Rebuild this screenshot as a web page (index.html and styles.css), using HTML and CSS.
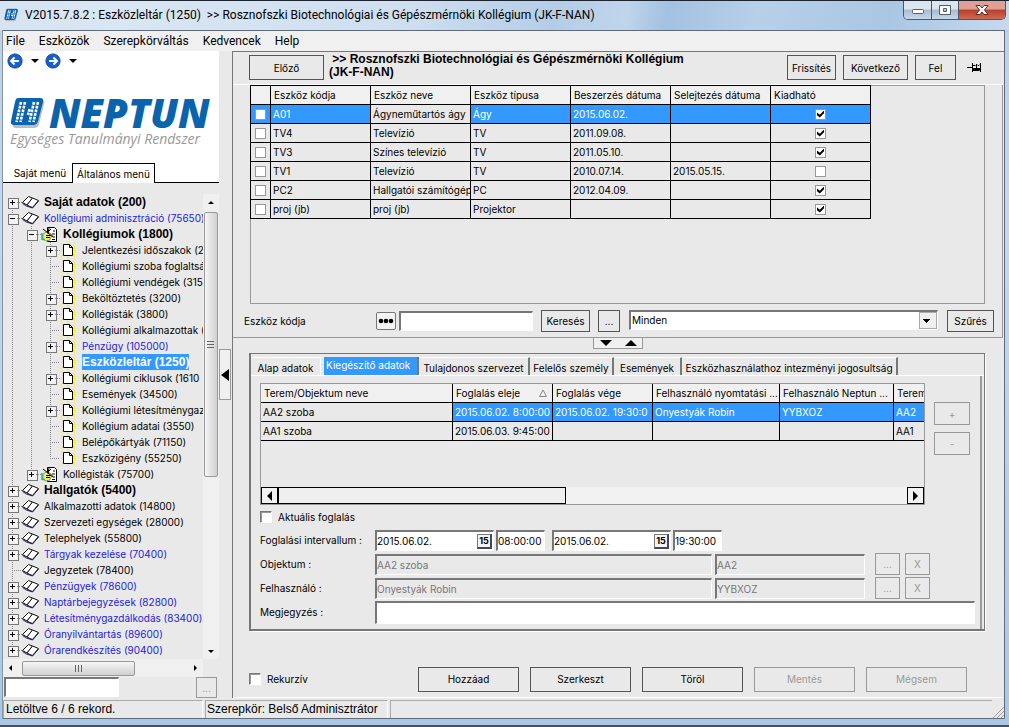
FILE: index.html
```
<!DOCTYPE html>
<html lang="hu">
<head>
<meta charset="utf-8">
<title>Eszközleltár (1250)</title>
<link rel="stylesheet" href="styles.css">
</head>
<body>
<svg class="defs" aria-hidden="true">
  <symbol id="book" viewBox="0 0 17 16">
    <path d="M.5 8.500 6.500 2.500l4 1.500-5.500 7z" fill="#fff" stroke="#111" stroke-linejoin="round"/>
    <path d="M10.500 4 16.500 6.500l-6 7-2.500-1-3-1.500z" fill="#fff" stroke="#111" stroke-linejoin="round"/>
    <path d="M.5 9.500l4 2.500 3 1 3 1 6-7" fill="none" stroke="#16166e"/>
  </symbol>
  <symbol id="page" viewBox="0 0 17 16">
    <path d="M1 1l3 3M15 1l-2 3M1 8h3M13 8h3M1 15l3-3M15 15l-3-3M8 0v2M8 16v-2M2.500 3v11M14.500 4v10" stroke="#f2ee2a" stroke-width="1.500" stroke-dasharray="1 1" fill="none"/>
    <path d="M3.500 2.500h6l3 3v8h-9z" fill="#fff" stroke="#000"/>
    <path d="M9.500 2.500v3h3" fill="none" stroke="#000"/>
  </symbol>
  <symbol id="hand" viewBox="0 0 17 16">
    <path d="M6.500 1.500h7l2 2v12h-9z" fill="#fff" stroke="#000"/>
    <path d="M12 5h2M11 8h3M12 11h2M11 13.500h3" stroke="#000"/>
    <path d="M2 8l3-2 4 1 3 3-2 1-1 3-4 1-3-2z" fill="#f5f25a" stroke="#555" stroke-width=".6"/>
    <path d="M2 3l10 8M8 2l-1 6M10 3l-4 4M5 9.500h5M5 11.500h4" stroke="#000" fill="none"/>
    <path d="M1 7v7M1 13.500h3" stroke="#18b8a8" stroke-width="1.500"/>
  </symbol>
  <symbol id="logo" viewBox="0 0 36 32">
    <path d="M7 3h25q3 0 2 4l-5 20q-1 4-5 4H6q-4 0-3-4z" fill="#b9bdc1"/>
    <path d="M8 1h22q4 0 3 4l-5 19q-1 4-5 4H4q-4 0-3-4L5 5q1-4 3-4z" fill="#0a63ad"/>
    <path d="M11 5 6.500 25M15 5l-4.500 20M24 5l-4.500 20M28 5l-4.500 20M19.500 12l-1.500 6" stroke="#fff" stroke-width="2.600" stroke-dasharray="2.800 1"/>
  </symbol>
</svg>

<div class="window">
  <header class="titlebar">
    <svg class="app-icon" viewBox="0 0 36 32"><use href="#logo"/></svg>
    <h1>V2015.7.8.2 : Eszközleltár (1250)&nbsp; &gt;&gt; Rosznofszki Biotechnológiai és Gépészmérnöki Kollégium (JK-F-NAN)</h1>
    <div class="caption">
      <button class="cap-btn cap-min" aria-label="Kis méret"><svg viewBox="0 0 14 12"><rect x="1.500" y="5.500" width="11" height="4" rx="1" fill="#fff" stroke="#555d68"/></svg></button>
      <button class="cap-btn cap-max" aria-label="Teljes méret"><svg viewBox="0 0 14 12"><path d="M1.500 1.500h11v9h-11zM5.500 4.500v3h3v-3z" fill="#fff" fill-rule="evenodd" stroke="#555d68"/></svg></button>
      <button class="cap-btn cap-close" aria-label="Bezárás"><svg viewBox="0 0 14 12"><path d="M1 1.500h4l2 2.500 2-2.500h4L9.500 6 13 10.500H9L7 8l-2 2.500H1L4.500 6z" fill="#fff" stroke="#5b2a2a"/></svg></button>
    </div>
  </header>

  <div class="client">
    <nav class="menubar">
      <button>File</button><button>Eszközök</button><button>Szerepkörváltás</button><button>Kedvencek</button><button>Help</button>
    </nav>

    <div class="workspace">
      <aside class="sidebar">
        <div class="brand">
          <div class="nav-arrows">
            <button aria-label="Vissza"><svg width="16" height="16" viewBox="0 0 18 18"><circle cx="9" cy="9" r="8" fill="#1560cf" stroke="#0b3d94"/><path d="M13.500 9H5M8.500 5 4.500 9l4 4" fill="none" stroke="#fff" stroke-width="2.200"/></svg></button>
            <span class="caret"></span>
            <button aria-label="Előre"><svg width="16" height="16" viewBox="0 0 18 18"><circle cx="9" cy="9" r="8" fill="#1560cf" stroke="#0b3d94"/><path d="M4.500 9H13M9.500 5l4 4-4 4" fill="none" stroke="#fff" stroke-width="2.200"/></svg></button>
            <span class="caret"></span>
          </div>
          <div class="wordmark"><svg width="36" height="32"><use href="#logo"/></svg><strong>NEPTUN</strong></div>
          <div class="slogan">Egységes Tanulmányi Rendszer</div>
          <div class="side-tabs"><button>Saját menü</button><button class="on">Általános menü</button></div>
        </div>

        <div class="tree-area">
          <ul class="tree">
            <li><i class="g first x plus"></i><svg class="ic"><use href="#book"/></svg><b>Saját adatok (200)</b></li>
            <li><i class="g v x"></i><svg class="ic"><use href="#book"/></svg><span class="blue">Kollégiumi adminisztráció (75650)</span></li>
            <li><i class="g v"></i><i class="g v x"></i><svg class="ic"><use href="#hand"/></svg><b>Kollégiumok (1800)</b></li>
            <li><i class="g v"></i><i class="g v"></i><i class="g v x plus"></i><svg class="ic"><use href="#page"/></svg><span>Jelentkezési időszakok (2</span></li>
            <li><i class="g v"></i><i class="g v"></i><i class="g v h"></i><svg class="ic"><use href="#page"/></svg><span>Kollégiumi szoba foglaltsá</span></li>
            <li><i class="g v"></i><i class="g v"></i><i class="g v h"></i><svg class="ic"><use href="#page"/></svg><span>Kollégiumi vendégek (315</span></li>
            <li><i class="g v"></i><i class="g v"></i><i class="g v x plus"></i><svg class="ic"><use href="#page"/></svg><span>Beköltöztetés (3200)</span></li>
            <li><i class="g v"></i><i class="g v"></i><i class="g v x plus"></i><svg class="ic"><use href="#page"/></svg><span>Kollégisták (3800)</span></li>
            <li><i class="g v"></i><i class="g v"></i><i class="g v h"></i><svg class="ic"><use href="#page"/></svg><span>Kollégiumi alkalmazottak (</span></li>
            <li><i class="g v"></i><i class="g v"></i><i class="g v x plus"></i><svg class="ic"><use href="#page"/></svg><span class="blue">Pénzügy (105000)</span></li>
            <li><i class="g v"></i><i class="g v"></i><i class="g v h"></i><svg class="ic"><use href="#page"/></svg><b class="sel">Eszközleltár (1250)</b></li>
            <li><i class="g v"></i><i class="g v"></i><i class="g v x plus"></i><svg class="ic"><use href="#page"/></svg><span>Kollégiumi ciklusok (1610</span></li>
            <li><i class="g v"></i><i class="g v"></i><i class="g v h"></i><svg class="ic"><use href="#page"/></svg><span>Események (34500)</span></li>
            <li><i class="g v"></i><i class="g v"></i><i class="g v x plus"></i><svg class="ic"><use href="#page"/></svg><span>Kollégiumi létesítménygaz</span></li>
            <li><i class="g v"></i><i class="g v"></i><i class="g v h"></i><svg class="ic"><use href="#page"/></svg><span>Kollégium adatai (3550)</span></li>
            <li><i class="g v"></i><i class="g v"></i><i class="g v h"></i><svg class="ic"><use href="#page"/></svg><span>Belépőkártyák (71150)</span></li>
            <li><i class="g v"></i><i class="g v"></i><i class="g end h"></i><svg class="ic"><use href="#page"/></svg><span>Eszközigény (55250)</span></li>
            <li><i class="g v"></i><i class="g end x plus"></i><svg class="ic"><use href="#hand"/></svg><span>Kollégisták (75700)</span></li>
            <li><i class="g v x plus"></i><svg class="ic"><use href="#book"/></svg><b>Hallgatók (5400)</b></li>
            <li><i class="g v x plus"></i><svg class="ic"><use href="#book"/></svg><span>Alkalmazotti adatok (14800)</span></li>
            <li><i class="g v x plus"></i><svg class="ic"><use href="#book"/></svg><span>Szervezeti egységek (28000)</span></li>
            <li><i class="g v x plus"></i><svg class="ic"><use href="#book"/></svg><span>Telephelyek (55800)</span></li>
            <li><i class="g v x plus"></i><svg class="ic"><use href="#book"/></svg><span class="blue">Tárgyak kezelése (70400)</span></li>
            <li><i class="g v h"></i><svg class="ic"><use href="#book"/></svg><span>Jegyzetek (78400)</span></li>
            <li><i class="g v x plus"></i><svg class="ic"><use href="#book"/></svg><span class="blue">Pénzügyek (78600)</span></li>
            <li><i class="g v x plus"></i><svg class="ic"><use href="#book"/></svg><span class="blue">Naptárbejegyzések (82800)</span></li>
            <li><i class="g v x plus"></i><svg class="ic"><use href="#book"/></svg><span class="blue">Létesítménygazdálkodás (83400)</span></li>
            <li><i class="g v x plus"></i><svg class="ic"><use href="#book"/></svg><span class="blue">Óranyilvántartás (89600)</span></li>
            <li><i class="g v x plus"></i><svg class="ic"><use href="#book"/></svg><span class="blue">Órarendkészítés (90400)</span></li>
          </ul>
          <div class="vbar"><i class="arr up"></i><div class="thumb"><i class="grip"></i></div><i class="arr down"></i></div>
        </div>
        <div class="hbar"><i class="arr left"></i><div class="thumb"><i class="grip"></i></div><i class="arr right"></i></div>
        <div class="side-search"><input type="text" class="sunk" aria-label="Menü keresés"><button class="btn" disabled>...</button></div>
      </aside>

      <div class="splitter"><button aria-label="Panel elrejtése"><i class="arr left"></i></button></div>

      <main class="content">
        <div class="toolbar">
          <button class="btn prev">Előző</button>
          <h2>&nbsp;&gt;&gt; Rosznofszki Biotechnológiai és Gépészmérnöki Kollégium <span>(JK-F-NAN)</span></h2>
          <button class="btn refresh">Frissítés</button>
          <button class="btn next">Következő</button>
          <button class="btn up-btn">Fel</button>
          <svg class="pin" width="15" height="11" viewBox="0 0 15 11"><path d="M0 5.500h5M5.500 1v9M5.500 3.500h3M5.500 8.500h7M9.500 2v5M13.500 1v9M9 2.500h1l1 1h1l1-1" fill="none" stroke="#000"/><path d="M6 6h7v2H6z"/></svg>
        </div>

        <section class="upper">
          <div class="list-box">
            <table class="grid assets">
              <colgroup><col class="c-tick"><col><col><col><col><col><col></colgroup>
              <thead><tr><th></th><th>Eszköz kódja</th><th>Eszköz neve</th><th>Eszköz típusa</th><th>Beszerzés dátuma</th><th>Selejtezés dátuma</th><th>Kiadható</th></tr></thead>
              <tbody>
                <tr class="hot"><td><input type="checkbox" aria-label="A01"></td><td>A01</td><td class="focus">Ágyneműtartós ágy</td><td>Ágy</td><td>2015.06.02.</td><td></td><td><input type="checkbox" checked aria-label="A01 kiadható"></td></tr>
                <tr><td><input type="checkbox" aria-label="TV4"></td><td>TV4</td><td>Televízió</td><td>TV</td><td>2011.09.08.</td><td></td><td><input type="checkbox" checked aria-label="TV4 kiadható"></td></tr>
                <tr><td><input type="checkbox" aria-label="TV3"></td><td>TV3</td><td>Színes televízió</td><td>TV</td><td>2011.05.10.</td><td></td><td><input type="checkbox" checked aria-label="TV3 kiadható"></td></tr>
                <tr><td><input type="checkbox" aria-label="TV1"></td><td>TV1</td><td>Televízió</td><td>TV</td><td>2010.07.14.</td><td>2015.05.15.</td><td><input type="checkbox" aria-label="TV1 kiadható"></td></tr>
                <tr><td><input type="checkbox" aria-label="PC2"></td><td>PC2</td><td>Hallgatói számítógép</td><td>PC</td><td>2012.04.09.</td><td></td><td><input type="checkbox" checked aria-label="PC2 kiadható"></td></tr>
                <tr><td><input type="checkbox" aria-label="proj"></td><td>proj (jb)</td><td>proj (jb)</td><td>Projektor</td><td></td><td></td><td><input type="checkbox" checked aria-label="proj kiadható"></td></tr>
              </tbody>
            </table>
          </div>
          <div class="search">
            <label for="code">Eszköz kódja</label>
            <button class="dots" aria-label="Keresési mód"><svg width="16" height="6" viewBox="0 0 16 6"><circle cx="3" cy="3" r="2.300"/><circle cx="8" cy="3" r="2.300"/><circle cx="13" cy="3" r="2.300"/></svg></button>
            <input type="text" id="code" class="sunk">
            <button class="btn find">Keresés</button>
            <button class="btn more">...</button>
            <div class="combo sunk"><select aria-label="Szűrő"><option>Minden</option></select></div>
            <button class="btn filter">Szűrés</button>
          </div>
        </section>

        <div class="updown"><div><i class="arr down"></i><i class="arr up"></i></div></div>

        <section class="detail">
          <div class="tabs">
            <button class="t1">Alap adatok</button><button class="on">Kiegészítő adatok</button><button class="t3">Tulajdonos szervezet</button><button class="t4">Felelős személy</button><button class="t5">Események</button><button class="t6">Eszközhasználathoz intezményi jogosultság</button>
          </div>
          <div class="tab-body">
            <div class="book-row">
              <div class="book-box">
                <table class="grid bookings">
                  <colgroup><col class="c-room"><col><col><col class="c-name"><col class="c-code"><col></colgroup>
                  <thead><tr><th>Terem/Objektum neve</th><th><div class="sorted">Foglalás eleje<svg width="8" height="8" viewBox="0 0 8 8"><path d="M4 1 7.500 7.500h-7z" fill="none" stroke="#888"/></svg></div></th><th>Foglalás vége</th><th>Felhasználó nyomtatási ...</th><th>Felhasználó Neptun ...</th><th>Terem</th></tr></thead>
                  <tbody>
                    <tr class="hot"><td class="focus dotted">AA2 szoba</td><td>2015.06.02. 8:00:00</td><td>2015.06.02. 19:30:0</td><td>Onyestyák Robin</td><td>YYBXOZ</td><td>AA2</td></tr>
                    <tr><td>AA1 szoba</td><td>2015.06.03. 9:45:00</td><td></td><td></td><td></td><td>AA1</td></tr>
                  </tbody>
                </table>
                <div class="flatbar"><b><i class="arr left"></i></b><span></span><b><i class="arr right"></i></b></div>
              </div>
              <div class="plusminus"><button class="btn" disabled>+</button><button class="btn" disabled>-</button></div>
            </div>

            <label class="tick"><input type="checkbox">Aktuális foglalás</label>

            <div class="fields">
              <label for="from">Foglalási intervallum :</label>
              <div class="line">
                <div class="date sunk"><input type="text" id="from" value="2015.06.02."><button aria-label="Naptár">15</button></div>
                <input type="text" class="sunk time" value="08:00:00" aria-label="Kezdő idő">
                <div class="date sunk second"><input type="text" value="2015.06.02." aria-label="Vége"><button aria-label="Naptár">15</button></div>
                <input type="text" class="sunk time" value="19:30:00" aria-label="Záró idő">
              </div>
              <label for="obj">Objektum :</label>
              <div class="line"><input type="text" id="obj" class="sunk wide" disabled value="AA2 szoba"><input type="text" class="sunk code" disabled value="AA2" aria-label="Objektum kód"><button class="btn sm" disabled>...</button><button class="btn sm last" disabled>X</button></div>
              <label for="usr">Felhasználó :</label>
              <div class="line"><input type="text" id="usr" class="sunk wide" disabled value="Onyestyák Robin"><input type="text" class="sunk code" disabled value="YYBXOZ" aria-label="Neptun kód"><button class="btn sm" disabled>...</button><button class="btn sm last" disabled>X</button></div>
              <label for="note">Megjegyzés :</label>
              <div class="line"><input type="text" id="note" class="sunk note"></div>
            </div>
          </div>
        </section>

        <div class="actions">
          <label class="tick"><input type="checkbox">Rekurzív</label>
          <div class="action-btns"><button class="btn">Hozzáad</button><button class="btn">Szerkeszt</button><button class="btn">Töröl</button><button class="btn" disabled>Mentés</button><button class="btn" disabled>Mégsem</button></div>
        </div>
      </main>
    </div>

    <footer class="status"><span class="s1">Letöltve 6 / 6 rekord.</span><span class="s2">Szerepkör: Belső Adminisztrátor</span><span class="s3"></span>
      <svg class="size-grip" width="12" height="12" viewBox="0 0 12 12"><path d="M1 12 12 1M5 12l7-7M9 12l3-3" stroke="#999" fill="none"/></svg>
    </footer>
  </div>
</div>
</body>
</html>
```

FILE: styles.css
```
* { box-sizing: border-box; }
body { margin: 0; font: 10px/16px Inter, "Liberation Sans", sans-serif; color: #000; background: #4a4f55; }
button, input, select { font: inherit; color: inherit; margin: 0; padding: 0; border: 0; border-radius: 0; background: none; }
h1, h2, ul { margin: 0; padding: 0; }
.defs { position: absolute; width: 0; height: 0; }

.window { min-height: 100vh; display: flex; flex-direction: column; padding: 0 4px 8px 3px; border-top: 1px solid #1c2430; background: linear-gradient(#b9d0e8, #c3d8ee 30%, #a9c8e8) no-repeat 0 0 / 100% calc(100% - 2px); }
.titlebar { display: flex; align-items: flex-start; height: 29px; margin: 0 -4px 0 -3px; padding-left: 4px; background: linear-gradient(100deg, #d6e3f0 0, #d9e6f3 12%, #cfdff0 40%, #b4cde7 55%, #bfd5ec 62%, #a3c1e0 66%, #b7d0ea 75%, #a9c6e3 88%, #c5daef 100%); }
.app-icon { width: 15px; height: 14px; margin-top: 7px; }
.titlebar h1 { flex: 1; min-width: 0; margin-left: 6px; font: 12px/28px Roboto, "Open Sans", sans-serif; white-space: nowrap; overflow: hidden; }
.caption { display: flex; height: 19px; margin-right: 3px; border: 1px solid #4b5665; border-top: 0; border-radius: 0 0 5px 5px; overflow: hidden; }
.cap-btn { display: flex; align-items: center; justify-content: center; width: 28px; background: linear-gradient(#dbe5f0 0 45%, #a9bbcf 50%, #c7d8ea); border-right: 1px solid #4b5665; }
.cap-btn svg { width: 14px; height: 12px; }
.cap-max { width: 27px; }
.cap-close { width: 46px; border: 0; background: linear-gradient(#e0a093 0 45%, #b8402c 50%, #cf6a4e); }

.client { flex: 1; display: flex; flex-direction: column; background: #e9e9e9; border: 1px solid #5f6b78; border-left-width: 0; box-shadow: -1px 0 #8594a4; }
.menubar { display: flex; gap: 14px; height: 20px; padding-left: 3px; background: #f0f0f0; font: 12px/18px Roboto, "Open Sans", sans-serif; }
.workspace { flex: 1; display: flex; }

.sidebar { width: 216px; flex: none; display: flex; flex-direction: column; }
.brand { background: #fff; height: 132px; display: flex; flex-direction: column; }
.nav-arrows { display: flex; align-items: center; height: 20px; padding-left: 4px; }
.nav-arrows button { display: flex; }
.caret { border: 4px solid transparent; border-top: 4px solid #000; border-bottom: 0; margin: 0 6px 0 8px; }
.wordmark { display: flex; align-items: center; height: 32px; margin-top: 26px; padding-left: 7px; color: #0a63ad; }
.wordmark strong { font: italic 800 40px/32px "Open Sans", "Noto Sans", sans-serif; margin-left: 3px; }
.slogan { padding-left: 7px; font: italic 14px/20px "Open Sans", "Noto Sans", sans-serif; color: #999; white-space: nowrap; }
.side-tabs { display: flex; margin-top: auto; height: 20px; background: linear-gradient(#000, #000) no-repeat 0 100% / 100% 1px; }
.side-tabs button { width: 69px; padding-left: 5px; white-space: nowrap; }
.side-tabs .on { width: 83px; padding: 0; border: 1px solid #000; border-bottom: 0; background: #fff; }

.tree-area { flex: 1; display: flex; margin-top: 11px; }
.tree { flex: 1; min-width: 0; overflow: hidden; list-style: none; }
.tree li { display: flex; height: 16px; white-space: nowrap; }
.tree b { font: bold 12px/16px "Liberation Sans", Arial, sans-serif; }
.tree .blue { color: #2222e0; }
.tree .sel { background: #3399ff; color: #fff; }
.g { width: 19px; flex: none; position: relative; }
.v { background: repeating-linear-gradient(#888 0 1px, transparent 1px 2px) no-repeat 9px 0 / 1px 100%; }
.end { background: repeating-linear-gradient(#888 0 1px, transparent 1px 2px) no-repeat 9px 0 / 1px 8px; }
.first { background: repeating-linear-gradient(#888 0 1px, transparent 1px 2px) no-repeat 9px 8px / 1px 8px; }
.x::before { content: ""; position: absolute; left: 5px; top: 4px; width: 9px; height: 9px; border: 1px solid #777; background: linear-gradient(#000, #000) no-repeat 1px 3px / 5px 1px, #f2f2f2; }
.plus::before { background: linear-gradient(#000, #000) no-repeat 1px 3px / 5px 1px, linear-gradient(#000, #000) no-repeat 3px 1px / 1px 5px, #f2f2f2; }
.x::after, .h::after { content: ""; position: absolute; left: 14px; right: 0; top: 8px; height: 1px; background: repeating-linear-gradient(90deg, #888 0 1px, transparent 1px 2px); }
.h::after { left: 9px; }
.ic { width: 17px; height: 16px; flex: none; margin-right: 5px; }

.arr { width: 0; height: 0; border: 4px solid transparent; display: block; flex: none; }
.arr.up { border-bottom-color: #000; border-top: 0; }
.arr.down { border-top-color: #000; border-bottom: 0; }
.arr.left { border-right-color: #000; border-left: 0; }
.arr.right { border-left-color: #000; border-right: 0; }
.vbar { width: 16px; display: flex; flex-direction: column; align-items: center; padding: 7px 1px 6px 0; background: #f0f0f0; }
.vbar .arr, .hbar .arr { border-width: 3px; }
.vbar .arr.up, .hbar .arr.up { border-top: 0; }
.vbar .arr.down { border-bottom: 0; margin-top: auto; }
.hbar .arr.left { border-left: 0; }
.hbar .arr.right { border-right: 0; margin-left: auto; }
.thumb { display: flex; align-items: center; justify-content: center; border: 1px solid #999; border-radius: 2px; }
.vbar .thumb { width: 14px; height: 265px; margin-top: 8px; background: linear-gradient(90deg, #f6f6f6, #d0d0d0); }
.vbar .grip { width: 7px; height: 8px; background: repeating-linear-gradient(#666 0 1px, transparent 1px 3px); }
.hbar { display: flex; align-items: center; height: 18px; margin-right: 16px; padding: 0 6px; background: #f0f0f0; }
.hbar .thumb { width: 113px; height: 15px; margin-left: 10px; background: linear-gradient(#f6f6f6, #d0d0d0); }
.hbar .grip { width: 8px; height: 7px; background: repeating-linear-gradient(90deg, #666 0 1px, transparent 1px 3px); }
.side-search { display: flex; justify-content: space-between; height: 21px; padding: 0 2px 0 1px; }
.side-search input { width: 115px; height: 20px; }
.side-search .btn { width: 21px; height: 21px; }

.splitter { width: 13px; flex: none; display: flex; padding-top: 298px; }
.splitter button { width: 12px; height: 51px; display: flex; align-items: center; justify-content: center; border: 1px solid #999; background: #f0f0f0; }
.splitter .arr { border-width: 6px 8px 6px 0; }

.btn { height: 25px; border: 1px solid #555; text-align: center; white-space: nowrap; }
.btn:disabled { border-color: #999; color: #999; }
.sunk { border: 1px solid #fff; border-top: 2px solid #777; border-left: 2px solid #777; background: #fff; }
.sunk:disabled { background: #e9e9e9; color: #777; }

.content { flex: 1; min-width: 0; display: flex; flex-direction: column; border-left: 1px solid #777; border-top: 1px solid #777; padding-right: 1px; }
.toolbar { display: flex; align-items: center; gap: 7px; height: 33px; padding: 0 21px 1px 16px; border-bottom: 1px solid #fff; }
.toolbar .prev { width: 75px; }
.toolbar h2 { flex: 1; min-width: 0; font: bold 12px/13px "Liberation Sans", Arial, sans-serif; margin-left: -2px; align-self: flex-start; padding: 1px 90px 0 0; }
.toolbar h2 span { white-space: nowrap; }
.toolbar .btn { min-width: 41px; padding: 0 4px; }
.toolbar .refresh { width: 49px; padding: 0; }
.toolbar .next { width: 65px; }
.pin { margin-left: 4px; }

.upper { flex: 1; display: flex; flex-direction: column; padding-left: 17px; border-right: 1px solid #999; border-bottom: 1px solid #999; }
.list-box { flex: 1; min-height: 218px; margin-right: 17px; border: 1px solid #999; border-top: 0; border-left: 0; box-shadow: inset 1px 0 #999, inset 0 1px #999; }
.grid { border-collapse: collapse; table-layout: fixed; background: #e9e9e9; }
.grid th, .grid td { height: 19px; padding: 0 2px; border: 1px solid #000; font-weight: normal; text-align: left; line-height: 16px; white-space: nowrap; overflow: hidden; }
.grid th { background: #f0f0f0; padding-left: 3px; }
.assets { width: 621px; }
.c-tick { width: 20px; }
.assets td:first-child, .assets td:last-child { text-align: center; padding: 0; }
.hot td { background: #3399ff; color: #fff; }
.hot td.focus { background: #e9e9e9; color: #000; }
.grid .dotted { border-style: dotted; }
input[type="checkbox"] { appearance: none; width: 11px; height: 11px; flex: none; border: 1px solid #999; background: #fff; display: inline-block; vertical-align: middle; }
.grid input[type="checkbox"] { display: block; margin: 0 auto; }
input[type="checkbox"]:checked::before { content: ""; display: block; width: 7px; height: 7px; margin: 1px; background: #000; clip-path: polygon(0 30%, 40% 62%, 100% 0, 100% 38%, 40% 100%, 0 68%); }

.search { display: flex; align-items: center; height: 33px; margin-left: -6px; padding-right: 8px; }
.search label { width: 132px; }
.dots { display: flex; align-items: center; justify-content: center; width: 20px; height: 18px; border: 1px solid #777; border-radius: 2px; background: #f4f4f4; }
.search input { width: 134px; height: 20px; margin-left: 3px; }
.search .btn { height: 22px; }
.find { width: 49px; margin-left: 8px; }
.more { width: 22px; margin-left: 8px; }
.combo { flex: 1; height: 20px; margin: 0 9px 2px; display: flex; position: relative; }
.combo select { flex: 1; appearance: none; padding-left: 1px; }
.combo::after { content: ""; position: absolute; right: 0; top: 0; bottom: 0; width: 16px; border: 1px solid #aaa; background: linear-gradient(#000, #000) no-repeat 3px 6px / 7px 1px, linear-gradient(#000, #000) no-repeat 4px 7px / 5px 1px, linear-gradient(#000, #000) no-repeat 5px 8px / 3px 1px, linear-gradient(#000, #000) no-repeat 6px 9px / 1px 1px, #f0f0f0; pointer-events: none; }
.filter { width: 47px; }

.updown { display: flex; justify-content: center; height: 15px; }
.updown div { display: flex; align-items: center; gap: 13px; width: 50px; height: 11px; padding: 0 6px; border: 1px solid #999; border-top: 0; background: #f0f0f0; }
.updown .arr.up { border-width: 0 6px 6px; }
.updown .arr.down { border-width: 6px 6px 0; }

.detail { margin: 0 18px 0 16px; border: 2px solid #777; border-top-width: 1px; border-right-width: 1px; box-shadow: 1px 1px #fff; }
.tabs { display: flex; height: 22px; padding-top: 3px; border-bottom: 1px solid #fff; }
.tabs button { height: 18px; padding: 2px 0 0; border-right: 2px solid #777; line-height: 16px; white-space: nowrap; border-top: 1px solid #fff; text-align: center; }
.tabs .t1 { width: 70px; border-right: 1px solid #fff; margin-right: 3px; }
.tabs .on { width: 95px; background: #3399ff; color: #fff; border-top: 0; padding: 0 0 2px 2px; text-align: left; }
.tabs .t3 { width: 111px; }
.tabs .t4 { width: 84px; }
.tabs .t5 { width: 68px; }
.tabs .t6 { width: 216px; }
.tab-body { margin-right: 2px; border-right: 2px solid #999; padding: 7px 5px 6px 9px; }
.book-row { display: flex; gap: 9px; margin-right: 5px; }
.book-box { flex: 1; min-width: 0; height: 122px; display: flex; flex-direction: column; justify-content: space-between; overflow: hidden; border: 1px solid #999; }
.bookings { width: 733px; margin: -1px 0 0 -1px; }
.bookings col { width: 100px; }
.bookings .c-room { width: 192px; }
.bookings .c-name { width: 127px; }
.bookings .c-code { width: 114px; }
.bookings th, .bookings td { padding-right: 0; }
.sorted { display: flex; align-items: center; justify-content: space-between; padding-right: 5px; }
.flatbar { display: flex; height: 17px; background: #f2f2f2; }
.flatbar b { width: 17px; display: flex; align-items: center; justify-content: center; border: 1px solid #000; }
.flatbar b:last-child { margin-left: auto; }
.flatbar .arr.left { border-width: 5px 5px 5px 0; }
.flatbar .arr.right { border-width: 5px 0 5px 5px; }
.flatbar span { flex: 0 1 288px; border: 1px solid #000; background: #efefef; }
.plusminus { width: 36px; display: flex; flex-direction: column; gap: 7px; padding-top: 19px; }
.plusminus .btn { height: 23px; }
.tick { display: flex; align-items: center; gap: 6px; }
.tick input[type="checkbox"] { width: 12px; height: 12px; border: 1px solid #fff; border-top-color: #777; border-left-color: #777; box-shadow: inset 1px 1px #999; }
.tab-body .tick { height: 24px; }
.fields { display: grid; grid-template-columns: 115px 1fr; row-gap: 2px; align-items: center; white-space: nowrap; }
.line { display: flex; align-items: center; height: 22px; }
.line .sunk { height: 21px; }
.date { width: 119px; display: flex; }
.date input { flex: 1; min-width: 0; }
.date button { width: 15px; margin: 2px 1px 1px 0; border: 1px solid #777; border-right: 2px solid #446; border-bottom: 2px solid #446; background: #f4f4f4; font-size: 9px; line-height: 10px; font-weight: bold; }
.date.second { margin-left: 7px; }
.time { width: 49px; margin-left: 2px; }
.wide { flex: 1; min-width: 0; }
.code { width: 150px; margin-left: 3px; }
.sm { width: 25px; height: 22px; margin-left: 10px; }
.sm.last { margin: 0 45px 0 5px; }
.line .note { flex: 1; height: 23px; }

.actions { display: flex; align-items: center; height: 67px; padding: 30px 36px 0 16px; border-bottom: 1px solid #fff; }
.action-btns { display: flex; gap: 11px; margin-left: auto; }
.action-btns .btn { width: 101px; }

.status { display: flex; height: 20px; padding: 2px 0 0; font: 12px/17px "Liberation Sans", Arial, sans-serif; }
.status span { border: 1px solid #aaa; border-bottom: 0; border-right-color: #fff; padding-left: 2px; white-space: nowrap; }
.status .s1 { width: 200px; }
.status .s2 { width: 183px; margin-left: 2px; padding-left: 1px; }
.status .s3 { flex: 1; margin-left: 2px; border-right: 0; }
.size-grip { align-self: flex-end; }
```
